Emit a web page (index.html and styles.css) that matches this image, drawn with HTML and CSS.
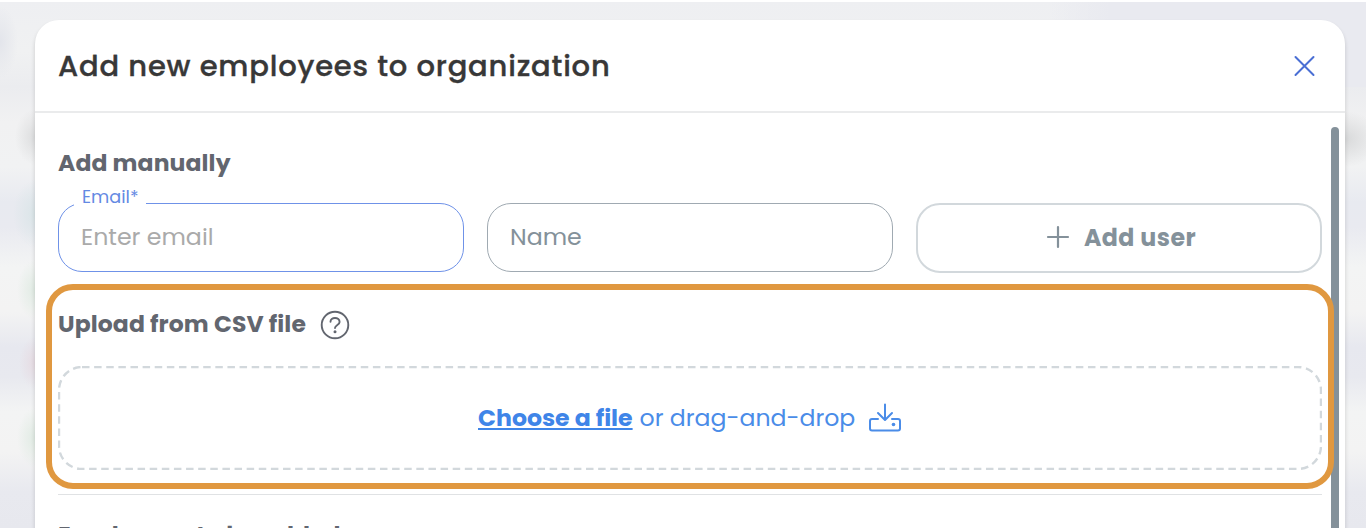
FILE: index.html
```html
<!DOCTYPE html>
<html lang="en">
<head>
    <meta charset="UTF-8">
    <meta name="viewport" content="width=device-width, initial-scale=1.0">
    <title>Add new employees</title>
    <link rel="stylesheet" href="styles.css">
</head>
<body>
    <div class="backdrop">
        <div class="modal">
            <div class="modal-header">
                <h1>Add new employees to organization</h1>
                <button class="close-button" aria-label="Close">
                    <svg width="22" height="22" viewBox="0 0 22 22"><path d="M2.5 2L20.5 20M20.5 2L2.5 20"/></svg>
                </button>
            </div>

            <div class="modal-body">
                <h2>Add manually</h2>
                <div class="fields">
                    <div class="field field-active">
                        <span class="field-label">Email*</span>
                        <span class="placeholder">Enter email</span>
                    </div>
                    <div class="field">
                        <span>Name</span>
                    </div>
                    <button class="add-button">
                        <svg width="24" height="24" viewBox="0 0 24 24"><path d="M12 2V22M2 12H22"/></svg>
                        <span>Add user</span>
                    </button>
                </div>

                <div class="upload">
                    <div class="highlight"></div>
                    <h2 class="upload-title">
                        <span>Upload from CSV file</span>
                        <svg class="help-icon" width="30" height="30" viewBox="0 0 30 30">
                            <circle cx="15" cy="15" r="13.3"/>
                            <path d="M10.5 11.8C10.5 9.6 12.5 8 15 8s4.6 1.6 4.6 3.9c0 3-4.6 3.1-4.6 6.2"/>
                            <circle class="dot" cx="15" cy="21.8" r="1.5"/>
                        </svg>
                    </h2>
                    <div class="dropzone">
                        <svg class="dropzone-border" width="1264" height="104" viewBox="0 0 1264 104">
                            <rect x="1" y="1" width="1262" height="102" rx="23"/>
                        </svg>
                        <a class="choose">Choose a file</a>
                        <span class="drag">or drag-and-drop</span>
                        <svg class="upload-icon" width="32" height="30" viewBox="0 0 32 30">
                            <path d="M16 1.5V16.5M9 10L16 17L23 10M9 16H3Q1 16 1 18V25.5Q1 27.5 3 27.5H29Q31 27.5 31 25.5V18Q31 16 29 16H23"/>
                            <circle cx="24.5" cy="21.5" r="1.8"/>
                        </svg>
                    </div>
                </div>

                <div class="added">
                    <h2>Employees to be added</h2>
                </div>
            </div>
            <div class="scrollbar"></div>
        </div>
    </div>
</body>
</html>
```
FILE: styles.css
```css
* {
    box-sizing: border-box;
}

body {
    margin: 0;
    padding: 2px 0;
    height: 530px;
    overflow: hidden;
    background-color: #fff;
    font-family: Poppins, Inter, sans-serif;
}

h1, h2 {
    margin: 0;
    white-space: nowrap;
}

button {
    padding: 0;
    background: none;
    border: none;
    font-family: inherit;
}

svg {
    flex: none;
    fill: none;
    stroke-linecap: round;
    stroke-linejoin: round;
}

/* Blurred page behind the modal */
.backdrop {
    height: 526px;
    padding: 18px 21px 0 35px;
    overflow: hidden;
    background:
        radial-gradient(ellipse 20px 28px at 35px 135px, #dcddde, transparent),
        radial-gradient(ellipse 22px 34px at 35px 212px, #dae5e8, transparent),
        radial-gradient(ellipse 18px 30px at 35px 288px, #e0ebe3, transparent),
        radial-gradient(ellipse 16px 26px at 35px 361px, #e6dbe2, transparent),
        radial-gradient(ellipse 18px 30px at 35px 436px, #e0ebe3, transparent),
        radial-gradient(ellipse 18px 36px at 0 40px, #e3e5eb, transparent),
        radial-gradient(ellipse 36px 28px at 1345px 137px, #d8d9da, transparent),
        linear-gradient(90deg, transparent 1050px, #e9eaf0 1110px) 0 0 / 100% 85px no-repeat,
        linear-gradient(#eeeff2 0, #f0f1f2 50px, #ebecef 85px, #f1f1f2 120px, #f1f2f3 165px, #e8eaf0 200px, #e9eaf0 225px, #f3f4f4 265px, #f3f3f3 310px, #e7e8ef 345px, #e8e9ef 375px, #f3f4f4 410px, #f3f3f3 450px, #e8e9ef 490px, #e7e8ee 526px);
}

.modal {
    position: relative;
    height: 540px;
    background-color: #fff;
    border-radius: 24px 24px 0 0;
    box-shadow: 0 3px 4px rgba(0, 0, 0, 0.16);
}

.modal-header {
    display: flex;
    justify-content: space-between;
    align-items: center;
    height: 93px;
    padding: 0 30px 0 23px;
    border-bottom: 2px solid #eaebec;
}

.modal-header h1 {
    padding-top: 2px;
    font-size: 29px;
    font-weight: 500;
    letter-spacing: 0.8px;
    color: #383838;
    -webkit-text-stroke: 0.35px #383838;
}

.close-button {
    height: 22px;
}

.close-button svg {
    stroke: #4a6fd4;
    stroke-width: 2;
}

.modal-body {
    padding: 33px 23px 0;
}

h2 {
    font-size: 23.5px;
    line-height: 34px;
    font-weight: 700;
    letter-spacing: 0.1px;
    color: #62666f;
}

.fields {
    display: grid;
    grid-template-columns: repeat(3, 1fr);
    gap: 23px;
    margin-top: 23px;
}

.field {
    position: relative;
    display: flex;
    align-items: center;
    height: 69px;
    padding: 0 0 2px 22px;
    border: 1.5px solid #a0aab2;
    border-radius: 24px;
    font-size: 23.7px;
    color: #84919a;
}

.field-active {
    border-color: #6f92e8;
}

/* Sits over the top border of the field */
.field-label {
    position: absolute;
    left: 15px;
    top: -18px;
    width: 72px;
    padding-left: 8px;
    background-color: #fff;
    font-size: 17.7px;
    line-height: 22px;
    color: #6389e3;
}

.placeholder {
    color: #aaa;
}

.add-button {
    display: flex;
    justify-content: center;
    align-items: center;
    gap: 14px;
    height: 70px;
    padding: 0 0 2px 4px;
    border: 2px solid #d2d8dc;
    border-radius: 24px;
    font-size: 23.7px;
    font-weight: 700;
    letter-spacing: 0.45px;
    color: #84919a;
}

.add-button svg {
    stroke: #84919a;
    stroke-width: 2.2;
}

.upload {
    position: relative;
    padding-top: 34px;
}

/* Callout drawn around the upload block */
.highlight {
    position: absolute;
    z-index: 2;
    left: -12.5px;
    right: -11.5px;
    top: 11px;
    height: 205px;
    border: 6px solid #e09840;
    border-radius: 27px;
}

.upload-title {
    display: flex;
    align-items: center;
    gap: 14px;
}

.help-icon {
    margin-top: 2px;
    stroke: #62666f;
    stroke-width: 1.9;
}

.help-icon .dot {
    fill: #62666f;
    stroke: none;
}

.dropzone {
    position: relative;
    display: flex;
    align-items: center;
    height: 104px;
    margin-top: 25px;
    padding: 0 0 1px 420px;
    font-size: 23.6px;
    white-space: nowrap;
    color: #4a8ce8;
}

.dropzone-border {
    position: absolute;
    left: 0;
    top: 0;
    stroke: #d2d8dc;
    stroke-width: 2.4;
    stroke-linecap: butt;
    stroke-dasharray: 7.5 4.62;
}

.choose {
    font-weight: 700;
    text-decoration: underline;
    text-decoration-thickness: 1.5px;
    text-underline-offset: 2px;
    color: #3f85e8;
}

.drag {
    margin-left: 7px;
}

.upload-icon {
    margin-left: 14px;
    stroke: #4a8ce8;
    stroke-width: 2;
}

.upload-icon circle {
    fill: #4a8ce8;
    stroke: none;
}

.added {
    margin-top: 24px;
    padding-top: 23px;
    border-top: 1px solid #e0e2e4;
}

.scrollbar {
    position: absolute;
    right: 6px;
    top: 107px;
    bottom: 0;
    width: 8px;
    background-color: #84919a;
    border-radius: 4px;
}
```
